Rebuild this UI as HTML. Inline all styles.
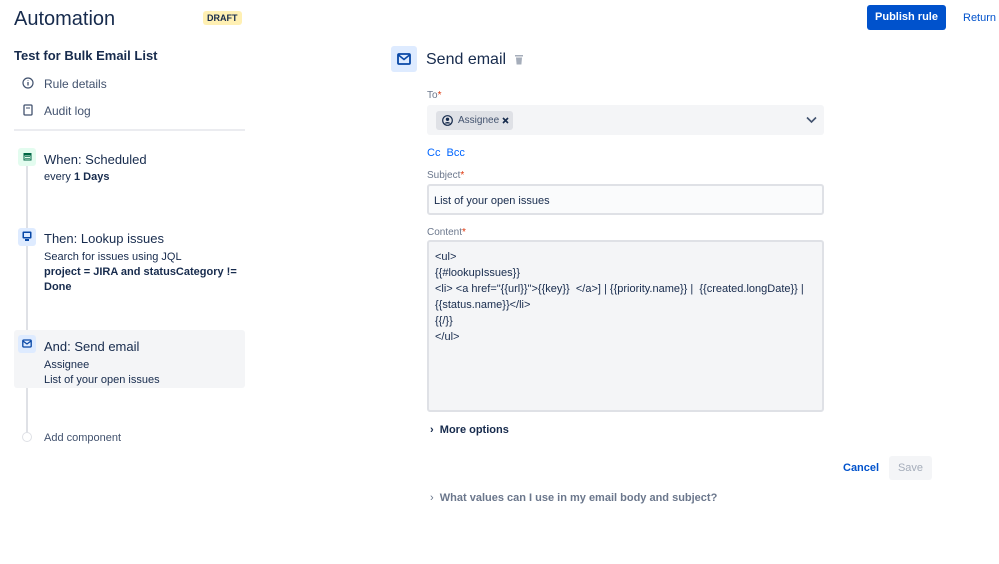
<!DOCTYPE html>
<html><head><meta charset="utf-8"><style>
*{margin:0;padding:0;box-sizing:border-box}
body{width:999px;height:564px;background:#fff;font-family:"Liberation Sans",sans-serif;color:#172b4d;position:relative;overflow:hidden}
.a{position:absolute;white-space:nowrap}
.lbl{font-size:10px;color:#6b778c}
.lbl b{color:#de350b;font-weight:normal}
.ic{position:absolute;width:18px;height:18px;border-radius:3px}
</style></head><body>
<div class="a" style="left:14px;top:8px;font-size:20px;color:#172b4d">Automation</div>
<div class="a" style="left:203px;top:11px;height:14px;padding:0 4px;background:#fff0b3;border-radius:3px;font-size:9px;font-weight:bold;line-height:14px;color:#172b4d">DRAFT</div>
<div class="a" style="left:14px;top:48px;font-size:13px;font-weight:bold">Test for Bulk Email List</div>
<svg class="a" style="left:22px;top:77px" width="12" height="12" viewBox="0 0 12 12"><circle cx="6" cy="6" r="5" fill="none" stroke="#42526e" stroke-width="1.2"/><path d="M6 5v3.5M6 3.2v.6" stroke="#42526e" stroke-width="1.3"/></svg>
<div class="a" style="left:44px;top:77px;font-size:12px;color:#42526e">Rule details</div>
<svg class="a" style="left:23px;top:104px" width="10" height="12" viewBox="0 0 10 12"><rect x="1" y="1" width="8" height="10" rx="1" fill="none" stroke="#42526e" stroke-width="1.3"/><path d="M3 4h4" stroke="#42526e"/></svg>
<div class="a" style="left:44px;top:104px;font-size:12px;color:#42526e">Audit log</div>
<div class="a" style="left:14px;top:129px;width:231px;height:2px;background:#ebecf0"></div>
<div class="a" style="left:26px;top:166px;width:2px;height:268px;background:#dfe1e6"></div>
<div class="ic" style="left:18px;top:148px;background:#e3fcef"></div>
<svg class="a" style="left:23px;top:152px" width="9" height="9" viewBox="0 0 9 9"><rect x=".5" y="1" width="8" height="7.5" fill="#006644"/><rect x="1.5" y="3.5" width="6" height="4" fill="#e3fcef"/><path d="M2 4.5h5M2 6.3h5" stroke="#006644" stroke-width=".7"/></svg>
<div class="a" style="left:44px;top:152px;font-size:13px">When: Scheduled</div>
<div class="a" style="left:44px;top:171px;font-size:11px">every <b>1 Days</b></div>
<div class="ic" style="left:18px;top:228px;background:#deebff"></div>
<svg class="a" style="left:22px;top:231px" width="10" height="11" viewBox="0 0 10 11"><rect x=".5" y=".5" width="9" height="7" rx="1" fill="#0747a6"/><rect x="2" y="2" width="6" height="4" fill="#deebff"/><rect x="3" y="8" width="4" height="2" fill="#0747a6"/></svg>
<div class="a" style="left:44px;top:231px;font-size:13px">Then: Lookup issues</div>
<div class="a" style="left:44px;top:250px;font-size:11px;line-height:15px;white-space:normal;width:200px">Search for issues using JQL<br><b>project = JIRA and statusCategory != Done</b></div>
<div class="a" style="left:14px;top:330px;width:231px;height:58px;background:#f4f5f7;border-radius:3px"></div>
<div class="ic" style="left:18px;top:335px;background:#deebff"></div>
<svg class="a" style="left:22px;top:339px" width="10" height="9" viewBox="0 0 10 9"><rect x=".8" y="1" width="8.4" height="7" rx="1" fill="none" stroke="#0747a6" stroke-width="1.3"/><path d="M1 2l4 3 4-3" fill="none" stroke="#0747a6" stroke-width="1.2"/></svg>
<div class="a" style="left:44px;top:339px;font-size:13px">And: Send email</div>
<div class="a" style="left:44px;top:358px;font-size:11px;line-height:15px">Assignee<br>List of your open issues</div>
<div class="a" style="left:22px;top:432px;width:10px;height:10px;border:1px solid #dfe1e6;border-radius:50%;background:#fff"></div>
<div class="a" style="left:44px;top:432px;font-size:11px;color:#42526e">Add component</div>

<div class="a" style="left:867px;top:5px;width:79px;height:25px;background:#0052cc;border-radius:3px;color:#fff;font-size:11px;font-weight:bold;text-align:center;line-height:25px">Publish rule</div>
<div class="a" style="left:963px;top:12px;font-size:11px;color:#0052cc">Return</div>

<div class="a" style="left:391px;top:46px;width:26px;height:26px;background:#deebff;border-radius:3px"></div>
<svg class="a" style="left:397px;top:53px" width="14" height="12" viewBox="0 0 14 12"><rect x="1" y="1" width="12" height="10" rx="1" fill="none" stroke="#0747a6" stroke-width="1.8"/><path d="M1.5 2l5.5 4.5 5.5-4.5" fill="none" stroke="#0747a6" stroke-width="1.6"/></svg>
<div class="a" style="left:426px;top:51px;font-size:16px">Send email</div>
<svg class="a" style="left:514px;top:54px" width="10" height="11" viewBox="0 0 10 11"><rect x="1" y="1" width="8" height="1.5" fill="#a5adba"/><path d="M2 3.5h6l-.6 7H2.6z" fill="#a5adba"/></svg>

<div class="a lbl" style="left:427px;top:90px">To<b>*</b></div>
<div class="a" style="left:427px;top:105px;width:397px;height:30px;background:#f4f5f7;border-radius:3px"></div>
<div class="a" style="left:436px;top:111px;width:77px;height:19px;background:#dfe1e6;border-radius:3px"></div>
<svg class="a" style="left:442px;top:115px" width="11" height="11" viewBox="0 0 11 11"><circle cx="5.5" cy="5.5" r="4.8" fill="none" stroke="#172b4d" stroke-width="1.2"/><circle cx="5.5" cy="4.3" r="1.7" fill="#172b4d"/><path d="M2.5 8.5c1-2 5-2 6 0" fill="#172b4d"/></svg>
<div class="a" style="left:458px;top:115px;font-size:10px;color:#42526e">Assignee</div>
<svg class="a" style="left:502px;top:117px" width="7" height="7" viewBox="0 0 7 7"><path d="M1 1l5 5M6 1L1 6" stroke="#172b4d" stroke-width="1.6"/></svg>
<svg class="a" style="left:806px;top:116px" width="11" height="8" viewBox="0 0 11 8"><path d="M1 1.5l4.5 4.5 4.5-4.5" fill="none" stroke="#42526e" stroke-width="1.6"/></svg>
<div class="a" style="left:427px;top:147px;font-size:11px;color:#0065ff">Cc&nbsp;&nbsp;Bcc</div>
<div class="a lbl" style="left:427px;top:170px">Subject<b>*</b></div>
<div class="a" style="left:427px;top:184px;width:397px;height:31px;background:#fafbfc;border:2px solid #dfe1e6;border-radius:3px;font-size:11px;padding:9px 0 0 5px">List of your open issues</div>
<div class="a lbl" style="left:427px;top:227px">Content<b>*</b></div>
<div class="a" style="left:427px;top:240px;width:397px;height:172px;background:#f4f5f7;border:2px solid #dfe1e6;border-radius:3px;font-size:11px;line-height:16px;padding:7px 0 0 6px;white-space:pre">&lt;ul&gt;
{{#lookupIssues}}
&lt;li&gt; &lt;a href="{{url}}"&gt;{{key}}  &lt;/a&gt;] | {{priority.name}} |  {{created.longDate}} |
{{status.name}}&lt;/li&gt;
{{/}}
&lt;/ul&gt;</div>
<div class="a" style="left:430px;top:424px;font-size:11px;font-weight:bold">›&nbsp; <span style="font-size:11px">More options</span></div>
<div class="a" style="left:843px;top:462px;font-size:11px;font-weight:bold;color:#0052cc">Cancel</div>
<div class="a" style="left:889px;top:456px;width:43px;height:24px;background:#f4f5f7;border-radius:3px;font-size:11px;color:#a5adba;text-align:center;line-height:24px">Save</div>
<div class="a" style="left:430px;top:492px;font-size:11px;color:#6b778c">›&nbsp; <b>What values can I use in my email body and subject?</b></div>
</body></html>
